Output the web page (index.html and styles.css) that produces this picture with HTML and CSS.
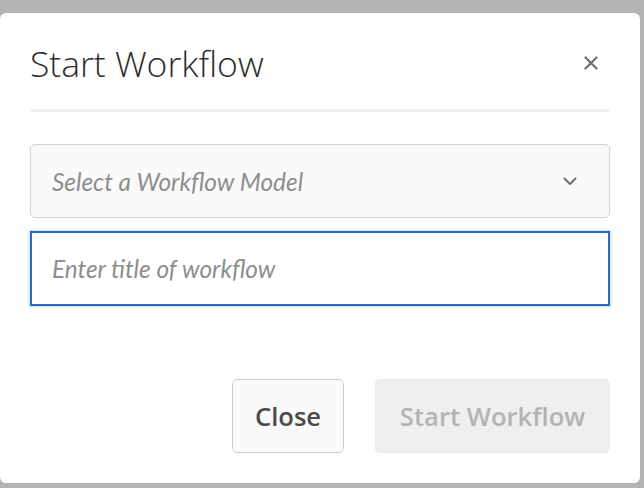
FILE: index.html
```html
<!DOCTYPE html>
<html>
<head>
<meta charset="utf-8">
<link rel="stylesheet" href="styles.css">
</head>
<body>
<div class="dialog">
  <div class="header">
    <h1 class="title">Start Workflow</h1>
    <button class="close-x" aria-label="Close">
      <svg width="14" height="14" viewBox="0 0 14 14"><path d="M1.5 1.5 L12.5 12.5 M12.5 1.5 L1.5 12.5" stroke="#6e6e6e" stroke-width="2.2" stroke-linecap="round" fill="none"/></svg>
    </button>
  </div>
  <div class="divider"></div>
  <div class="select">
    <span class="placeholder">Select a Workflow Model</span>
    <svg class="chevron" width="14" height="9" viewBox="0 0 14 9"><path d="M1.5 1.5 L7 7 L12.5 1.5" stroke="#707070" stroke-width="2" stroke-linecap="round" stroke-linejoin="round" fill="none"/></svg>
  </div>
  <div class="input">
    <span class="placeholder">Enter title of workflow</span>
  </div>
  <div class="footer">
    <button class="btn btn-secondary">Close</button>
    <button class="btn btn-disabled">Start Workflow</button>
  </div>
</div>
</body>
</html>
```
FILE: styles.css
```css
html, body {
  margin: 0;
  padding: 0;
  background: #b3b3b3;
  width: 644px;
  height: 488px;
  overflow: hidden;
}
body {
  padding-top: 13px;
  box-sizing: border-box;
  font-family: "Open Sans", "Liberation Sans", sans-serif;
}
.dialog {
  width: 640px;
  height: 470px;
  background: #ffffff;
  border-radius: 6px;
  box-sizing: border-box;
  padding: 0 30px;
  display: flex;
  flex-direction: column;
}
.header {
  display: flex;
  align-items: center;
  justify-content: space-between;
  height: 96px;
}
.title {
  margin: 0;
  font-family: "Open Sans", sans-serif;
  font-weight: 300;
  font-size: 35.5px;
  color: #2c2c2c;
  letter-spacing: 0;
  line-height: 1;
  padding-top: 6px;
}
.close-x {
  border: 0;
  background: none;
  padding: 0;
  margin-right: 12px;
  width: 14px;
  height: 14px;
  display: flex;
  margin-top: 4px;
}
.divider {
  height: 3px;
  background: #f0f0f0;
}
.select {
  margin-top: 32px;
  height: 74px;
  box-sizing: border-box;
  border: 1.5px solid #d3d3d3;
  border-radius: 5px;
  background: #fafafa;
  display: flex;
  align-items: center;
  justify-content: space-between;
  padding: 0 32px 0 21px;
}
.placeholder {
  font-family: "Lato", sans-serif;
  font-style: italic;
  font-size: 24.4px;
  color: #8e8e8e;
}
.input {
  margin-top: 13px;
  height: 75px;
  box-sizing: border-box;
  border: 2px solid #2d6ac0;
  box-shadow: 0 0 2px 1px rgba(80, 140, 230, 0.35);
  background: #ffffff;
  display: flex;
  align-items: center;
  padding: 0 20px;
}
.footer {
  margin-top: 73px;
  display: flex;
  justify-content: flex-end;
  gap: 31px;
}
.btn {
  height: 74px;
  box-sizing: border-box;
  border-radius: 5px;
  font-family: "Open Sans", sans-serif;
  font-weight: 600;
  font-size: 25.6px;
  padding: 0;
}
.btn-secondary {
  width: 112px;
  border: 1.5px solid #cdcdcd;
  background: #fafafa;
  color: #4b4b4b;
}
.btn-disabled {
  width: 235px;
  border: 1.5px solid #e9e9e9;
  background: #efefef;
  color: #b3b3b3;
}
```
